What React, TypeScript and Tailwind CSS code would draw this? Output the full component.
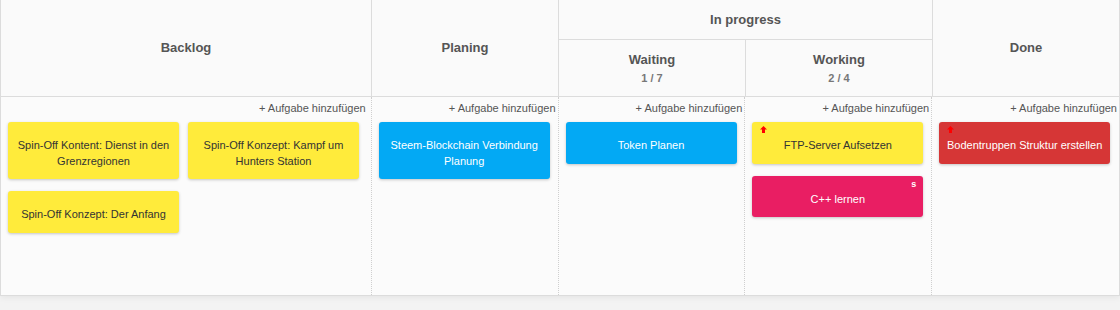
import React from "react";

type Task = {
    title: string;
    color: "yellow" | "blue" | "pink" | "red";
    urgent?: boolean;
    badge?: string;
};

const cardColors: Record<Task["color"], string> = {
    yellow: "bg-[#ffeb3b] text-[#333]",
    blue: "bg-[#03a9f4] text-white",
    pink: "bg-[#e91e63] text-white",
    red: "bg-[#d63636] text-white",
};

const columns: { key: string; width: string; pad: string; tasks: Task[] }[] = [
    {
        key: "backlog",
        width: "w-[371px]",
        pad: "pr-[5px]",
        tasks: [
            { title: "Spin-Off Kontent: Dienst in den Grenzregionen", color: "yellow" },
            { title: "Spin-Off Konzept: Kampf um Hunters Station", color: "yellow" },
            { title: "Spin-Off Konzept: Der Anfang", color: "yellow" },
        ],
    },
    {
        key: "planing",
        width: "w-[187px]",
        pad: "pr-[2px]",
        tasks: [{ title: "Steem-Blockchain Verbindung Planung", color: "blue" }],
    },
    {
        key: "waiting",
        width: "w-[187px]",
        pad: "pr-[2px]",
        tasks: [{ title: "Token Planen", color: "blue" }],
    },
    {
        key: "working",
        width: "w-[187px]",
        pad: "pr-[2px]",
        tasks: [
            { title: "FTP-Server Aufsetzen", color: "yellow", urgent: true },
            { title: "C++ lernen", color: "pink", badge: "s" },
        ],
    },
    {
        key: "done",
        width: "w-[187px]",
        pad: "pr-[2px]",
        tasks: [{ title: "Bodentruppen Struktur erstellen", color: "red", urgent: true }],
    },
];

function UpArrow() {
    return (
        <svg width="7" height="7" viewBox="0 0 7 7" className="absolute left-[8px] top-[4px]">
            <polygon points="3.5,0 7,3.5 5,3.5 5,7 2,7 2,3.5 0,3.5" fill="#ff0000" />
        </svg>
    );
}

function Card({ task }: { task: Task }) {
    return (
        <div
            className={`relative w-[171px] mb-[12px] rounded-[3px] px-[7px] pt-[16px] pb-[10px] text-center text-[11px] leading-[1.43] shadow-[0_1px_3px_rgba(0,0,0,0.22)] ${cardColors[task.color]}`}
        >
            {task.urgent && <UpArrow />}
            {task.badge && (
                <span className="absolute right-[7px] top-[2px] text-[9px] font-bold leading-[12px]">{task.badge}</span>
            )}
            {task.title}
        </div>
    );
}

export default function App() {
    return (
        <div className="w-[1120px] h-[310px] bg-[#f3f3f3] font-['Liberation_Sans',Arial,sans-serif]">
            <div className="w-[1120px] bg-[#fafafa] border-l border-r border-b border-[#dcdcdc] shadow-[0_2px_6px_rgba(0,0,0,0.06)]">
                {/* Header */}
                <div className="flex h-[97px] border-b border-[#dcdcdc] text-[#555] font-bold">
                    <div className="w-[371px] border-r border-[#dcdcdc] flex items-center justify-center text-[13px]">
                        Backlog
                    </div>
                    <div className="w-[187px] border-r border-[#dcdcdc] flex items-center justify-center text-[13px]">
                        Planing
                    </div>
                    <div className="w-[374px] border-r border-[#dcdcdc] flex flex-col">
                        <div className="h-[40px] border-b border-[#dcdcdc] flex items-center justify-center text-[13px]">
                            In progress
                        </div>
                        <div className="flex flex-1">
                            <div className="w-[187px] border-r border-[#dcdcdc] flex flex-col items-center pt-[12px]">
                                <span className="text-[13px] leading-[16px]">Waiting</span>
                                <span className="text-[11px] text-[#777] leading-[14px] mt-[3px]">1 / 7</span>
                            </div>
                            <div className="flex-1 flex flex-col items-center pt-[12px]">
                                <span className="text-[13px] leading-[16px]">Working</span>
                                <span className="text-[11px] text-[#777] leading-[14px] mt-[3px]">2 / 4</span>
                            </div>
                        </div>
                    </div>
                    <div className="flex-1 flex items-center justify-center text-[13px]">Done</div>
                </div>

                {/* Body */}
                <div className="flex h-[198px] bg-[#fbfbfb]">
                    {columns.map((col, i) => (
                        <div
                            key={col.key}
                            className={`${col.width} ${i < columns.length - 1 ? "border-r border-dotted border-[#cfcfcf]" : ""} pl-[7px] ${col.pad}`}
                        >
                            <div className="text-right text-[11px] leading-[14px] text-[#555] pt-[4px] pb-[7px]">
                                + Aufgabe hinzufügen
                            </div>
                            <div className="flex flex-wrap gap-x-[9px]">
                                {col.tasks.map((t) => (
                                    <Card key={t.title} task={t} />
                                ))}
                            </div>
                        </div>
                    ))}
                </div>
            </div>
        </div>
    );
}
